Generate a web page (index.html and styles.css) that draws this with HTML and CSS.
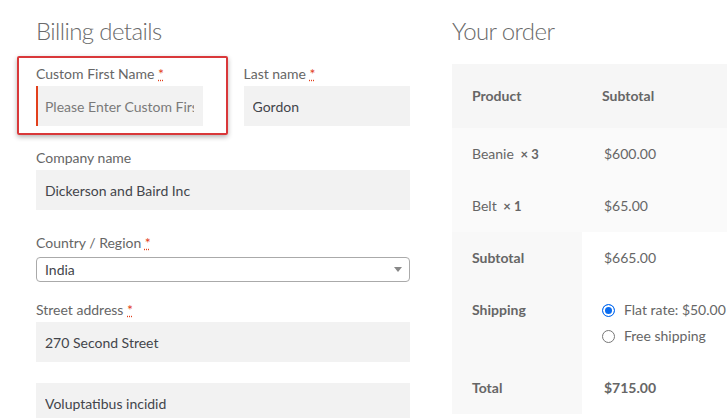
FILE: index.html
```html
<!DOCTYPE html>
<html lang="en">
<head>
    <meta charset="UTF-8">
    <meta name="viewport" content="width=device-width, initial-scale=1.0">
    <title>Checkout</title>
    <link rel="stylesheet" href="styles.css">
</head>
<body>
    <div class="checkout">
        <!-- Billing form -->
        <div class="billing">
            <h3>Billing details</h3>
            <div class="name-row">
                <div class="field highlighted">
                    <label>Custom First Name <abbr title="required">*</abbr></label>
                    <input type="text" class="invalid" placeholder="Please Enter Custom First Name">
                </div>
                <div class="field">
                    <label>Last name <abbr title="required">*</abbr></label>
                    <input type="text" value="Gordon">
                </div>
            </div>
            <div class="field field-company">
                <label>Company name</label>
                <input type="text" value="Dickerson and Baird Inc">
            </div>
            <div class="field field-select">
                <label>Country / Region <abbr title="required">*</abbr></label>
                <div class="select">
                    <span>India</span>
                    <span class="arrow"></span>
                </div>
            </div>
            <div class="field field-street">
                <label>Street address <abbr title="required">*</abbr></label>
                <input type="text" value="270 Second Street">
            </div>
            <div class="field">
                <input type="text" value="Voluptatibus incidid">
            </div>
        </div>

        <!-- Order review -->
        <div class="order">
            <h3>Your order</h3>
            <table class="order-table">
                <thead>
                    <tr>
                        <th class="col-name">Product</th>
                        <th>Subtotal</th>
                    </tr>
                </thead>
                <tbody>
                    <tr>
                        <td>Beanie <strong class="qty">&times;&nbsp;3</strong></td>
                        <td>$600.00</td>
                    </tr>
                    <tr>
                        <td>Belt <strong class="qty">&times;&nbsp;1</strong></td>
                        <td>$65.00</td>
                    </tr>
                </tbody>
                <tfoot>
                    <tr>
                        <th>Subtotal</th>
                        <td>$665.00</td>
                    </tr>
                    <tr class="shipping">
                        <th>Shipping</th>
                        <td>
                            <ul class="methods">
                                <li><span class="radio checked"></span>Flat rate: $50.00</li>
                                <li><span class="radio"></span>Free shipping</li>
                            </ul>
                        </td>
                    </tr>
                    <tr>
                        <th>Total</th>
                        <td><strong>$715.00</strong></td>
                    </tr>
                </tfoot>
            </table>
        </div>
    </div>
</body>
</html>
```

FILE: styles.css
```css
body {
    font-family: Lato, "Liberation Sans", sans-serif;
    font-size: 14px;
    color: #5b5b5b;
    margin: 0;
    padding: 16px 0 0 36px;
    background: #fff;
    overflow: hidden;
}
.checkout {
    display: flex;
    gap: 42px;
    width: 800px;
}
.billing {
    width: 374px;
    flex: none;
}
.order {
    flex: 1;
}
h3 {
    font-size: 24px;
    font-weight: 300;
    letter-spacing: -0.6px;
    line-height: 30px;
    color: #6a6a6a;
    margin: 0 0 18px;
}
.name-row {
    display: grid;
    grid-template-columns: 1fr 1fr;
    gap: 41px;
}
.field {
    margin-bottom: 22px;
    position: relative;
}
.field-company {
    margin-bottom: 23px;
}
.field-select {
    margin-bottom: 18px;
}
.field-street {
    margin-bottom: 21px;
}
label {
    display: block;
    line-height: 20px;
    margin-bottom: 2px;
    color: #666;
}
abbr {
    color: #e2401c;
    text-decoration: underline dotted;
}
input {
    display: block;
    box-sizing: border-box;
    width: 100%;
    height: 40px;
    padding: 0 9px;
    border: 0;
    background: #f2f2f2;
    font-family: inherit;
    font-size: 14px;
    color: #43454b;
    outline: none;
}
input.invalid {
    border-left: 2px solid #e2401c;
    padding-left: 7px;
}
input::placeholder {
    color: #7a7a7a;
}
.highlighted::before {
    content: "";
    position: absolute;
    top: -8px;
    left: -19px;
    right: -25px;
    bottom: -9px;
    border: 2px solid #d9383a;
    border-radius: 2px;
    box-shadow: 0 2px 5px rgba(0, 0, 0, 0.3);
    pointer-events: none;
}
.select {
    display: flex;
    align-items: center;
    justify-content: space-between;
    height: 25px;
    margin-top: 4px;
    box-sizing: border-box;
    border: 1px solid #aaa;
    border-radius: 4px;
    padding: 0 7px 0 8px;
    color: #43454b;
}
.arrow {
    border-top: 5px solid #888;
    border-left: 4px solid transparent;
    border-right: 4px solid transparent;
}
.order-table {
    border-collapse: collapse;
    width: 380px;
}
.order-table th,
.order-table td {
    text-align: left;
    line-height: 20px;
    padding: 16px 20px;
    vertical-align: middle;
}
.order-table td {
    padding-left: 22px;
    color: #666;
}
.order-table tbody td:first-child {
    padding-left: 20px;
}
.order-table th {
    font-weight: 700;
    color: #666;
}
.order-table thead th {
    background: #f6f6f6;
    padding-top: 22px;
    padding-bottom: 22px;
}
.col-name {
    width: 90px;
}
.order-table tbody td {
    background: #fafafa;
}
.order-table tfoot th {
    background: #f8f8f8;
    vertical-align: top;
}
.order-table tfoot td {
    background: #fff;
}
.order-table td strong {
    color: #666;
}
.qty {
    font-size: 13px;
    margin-left: 3px;
}
.methods {
    list-style: none;
    margin: 0;
    padding: 0;
}
.methods li {
    display: flex;
    align-items: center;
    line-height: 20px;
    margin-bottom: 6px;
}
.methods li:last-child {
    margin-bottom: 0;
}
.radio {
    width: 13px;
    height: 13px;
    box-sizing: border-box;
    border: 1px solid #777;
    border-radius: 50%;
    margin: 0 9px 0 -2px;
}
.radio.checked {
    border: 1px solid #0a6cf0;
    background: #0a6cf0;
    box-shadow: inset 0 0 0 2px #fff;
}
```
